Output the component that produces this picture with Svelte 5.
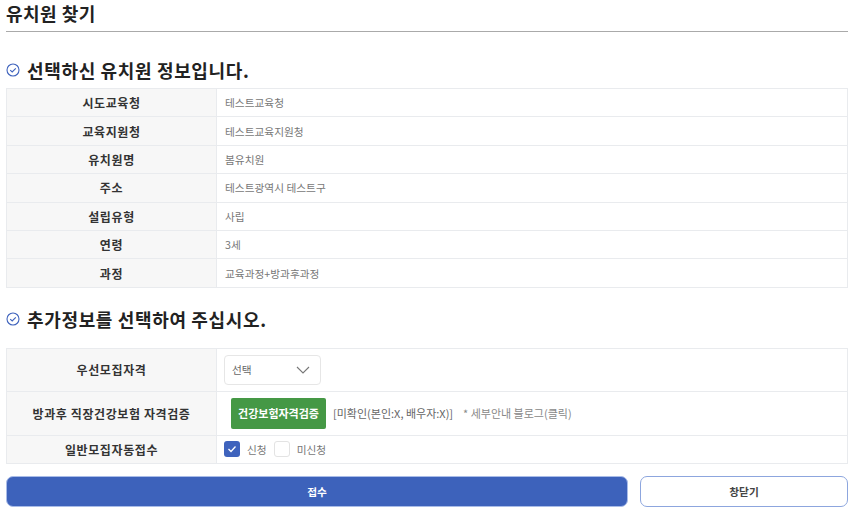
<script lang="ts">
	const info = [
		['시도교육청', '테스트교육청'],
		['교육지원청', '테스트교육지원청'],
		['유치원명', '봄유치원'],
		['주소', '테스트광역시 테스트구'],
		['설립유형', '사립'],
		['연령', '3세'],
		['과정', '교육과정+방과후과정']
	];

	let apply = $state(true);
	let noApply = $state(false);
</script>

{#snippet checkIcon()}
	<svg class="head-icon" viewBox="0 0 14 14" width="14" height="14" aria-hidden="true">
		<circle cx="7" cy="7" r="6" fill="none" stroke="#3f63bd" stroke-width="1.1" />
		<path d="M4.2 7.1 L6.2 9 L9.8 5.3" fill="none" stroke="#3f63bd" stroke-width="1.1" />
	</svg>
{/snippet}

<div class="page">
	<h1>유치원 찾기</h1>

	<h2>{@render checkIcon()}선택하신 유치원 정보입니다.</h2>
	<table class="info">
		<tbody>
			{#each info as [label, value]}
				<tr>
					<th>{label}</th>
					<td>{value}</td>
				</tr>
			{/each}
		</tbody>
	</table>

	<h2 class="second">{@render checkIcon()}추가정보를 선택하여 주십시오.</h2>
	<table class="extra">
		<tbody>
			<tr class="r1">
				<th>우선모집자격</th>
				<td>
					<div class="select">
						<span>선택</span>
						<svg viewBox="0 0 14 8" width="14" height="8" aria-hidden="true">
							<path d="M1 1 L7 7 L13 1" fill="none" stroke="#777" stroke-width="1.1" />
						</svg>
					</div>
				</td>
			</tr>
			<tr class="r2">
				<th>방과후 직장건강보험 자격검증</th>
				<td>
					<div class="verify">
						<button type="button" class="green">건강보험자격검증</button>
						<span class="status">[미확인(본인:X, 배우자:X)]</span>
						<span class="note">* 세부안내 블로그(클릭)</span>
					</div>
				</td>
			</tr>
			<tr class="r3">
				<th>일반모집자동접수</th>
				<td>
					<div class="checks">
						<label class="check">
							<input type="checkbox" bind:checked={apply} />
							<span class="box">
								{#if apply}
									<svg viewBox="0 0 16 16" width="16" height="16" aria-hidden="true">
										<path d="M4.5 8 L7 10.5 L11.5 5.5" fill="none" stroke="#fff" stroke-width="1.3" />
									</svg>
								{/if}
							</span>
							신청
						</label>
						<label class="check">
							<input type="checkbox" bind:checked={noApply} />
							<span class="box">
								{#if noApply}
									<svg viewBox="0 0 16 16" width="16" height="16" aria-hidden="true">
										<path d="M4.5 8 L7 10.5 L11.5 5.5" fill="none" stroke="#fff" stroke-width="1.3" />
									</svg>
								{/if}
							</span>
							미신청
						</label>
					</div>
				</td>
			</tr>
		</tbody>
	</table>

	<div class="actions">
		<button type="button" class="submit">접수</button>
		<button type="button" class="close">창닫기</button>
	</div>
</div>

<style>
	:global(body) {
		margin: 0;
		background: #fff;
	}

	.page {
		padding: 0 7px 0 6px;
		font-family: 'Noto Sans CJK KR', 'Noto Sans', sans-serif;
		color: #222;
	}

	h1 {
		margin: 0;
		height: 31px;
		border-bottom: 1px solid #aaa;
		font-size: 18px;
		line-height: 26px;
		letter-spacing: 0.5px;
		font-weight: 700;
		color: #222;
	}

	h2 {
		display: flex;
		align-items: center;
		gap: 7px;
		margin: 0;
		padding-top: 20px;
		height: 36px;
		font-size: 18px;
		line-height: 26px;
		letter-spacing: 0.65px;
		font-weight: 700;
	}

	h2.second {
		padding-top: 18px;
		height: 42px;
		align-items: flex-start;
	}

	.head-icon {
		flex: none;
	}

	h2.second .head-icon {
		margin-top: 6px;
	}

	table {
		width: 100%;
		border-collapse: collapse;
		table-layout: fixed;
	}

	th,
	td {
		border: 1px solid #e9ebee;
		padding: 0;
		font-size: 10.7px;
	}

	th {
		width: 209px;
		background: #f7f7f7;
		font-size: 12px;
		letter-spacing: 0.6px;
		font-weight: 700;
		color: #333;
		text-align: center;
	}

	td {
		padding-left: 7px;
		background: #fff;
		color: #777;
	}

	.info tr {
		height: 28.4px;
	}

	.info td {
		padding-left: 8px;
	}

	.r1 {
		height: 43px;
	}

	.r2 {
		height: 44px;
	}

	.r3 {
		height: 28px;
	}

	.select {
		display: flex;
		align-items: center;
		justify-content: space-between;
		box-sizing: border-box;
		width: 97px;
		height: 30px;
		padding: 0 10px 0 7px;
		border: 1px solid #e6e6e6;
		border-radius: 4px;
		color: #666;
	}

	.verify {
		display: flex;
		align-items: center;
	}

	.green {
		width: 95px;
		height: 31px;
		margin-left: 7px;
		padding: 0;
		border: none;
		border-radius: 2px;
		background: #459845;
		color: #fff;
		font: inherit;
		font-size: 11px;
		font-weight: 700;
	}

	.status {
		margin-left: 7px;
		font-size: 11px;
		color: #666;
	}

	.note {
		margin-left: 10px;
		font-size: 11px;
		color: #888;
	}

	.checks {
		display: flex;
		align-items: center;
		gap: 7px;
	}

	.check {
		display: flex;
		align-items: center;
		gap: 7px;
	}

	.check input {
		display: none;
	}

	.box {
		display: block;
		box-sizing: border-box;
		width: 16px;
		height: 16px;
		border: 1px solid #e3e3e3;
		border-radius: 3px;
		background: #fff;
	}

	.check input:checked + .box {
		border: none;
		background: #3f63bd;
	}

	.actions {
		display: flex;
		gap: 12px;
		margin-top: 12px;
	}

	.actions button {
		height: 31px;
		border-radius: 7px;
		font: inherit;
		font-size: 10.7px;
		font-weight: 700;
		padding: 0;
	}

	.submit {
		flex: 1;
		border: 1px solid #a9bce8;
		background: #3d62bb;
		color: #fff;
	}

	.close {
		width: 208px;
		border: 1px solid #8da6de;
		background: #fff;
		color: #444;
	}
</style>
